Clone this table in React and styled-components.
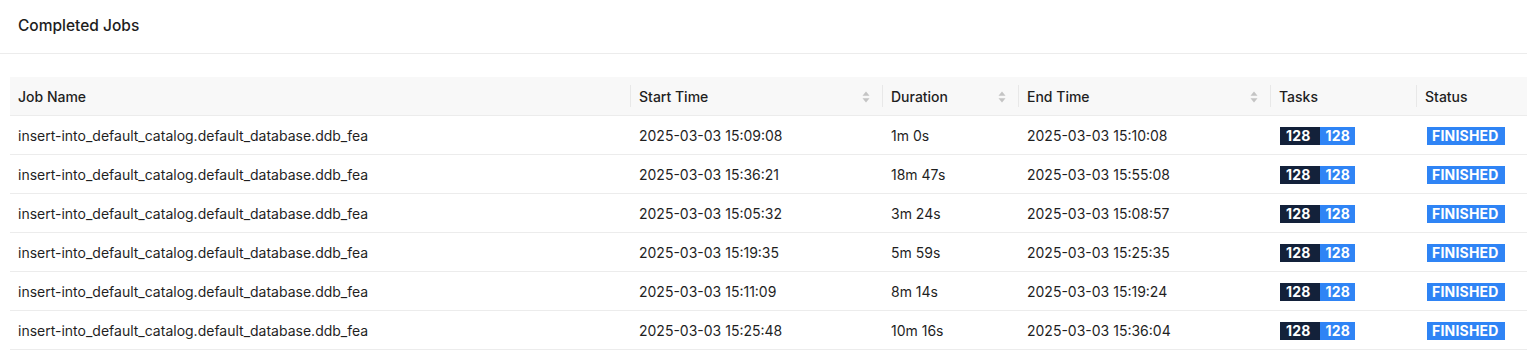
import React from "react";
import styled, { createGlobalStyle } from "styled-components";

const Global = createGlobalStyle`
  html, body { margin: 0; padding: 0; background: #fff; }
  body { font-family: Inter, "Noto Sans", sans-serif; color: #1f1f1f; }
`;

const Card = styled.section`
  display: flex;
  flex-direction: column;
`;

const CardHeader = styled.header`
  height: 54px;
  box-sizing: border-box;
  display: flex;
  align-items: center;
  padding: 0 18px 2px;
  border-bottom: 1px solid #ececec;
  font-size: 15.5px;
  font-weight: 500;
  color: #1d1d1d;
`;

const CardBody = styled.div`
  padding: 23px 0 0 10px;
`;

const Table = styled.table`
  width: 100%;
  border-collapse: separate;
  border-spacing: 0;
  table-layout: fixed;
  font-size: 14px;
`;

const Th = styled.th`
  position: relative;
  height: 39px;
  box-sizing: border-box;
  padding: 1px 8px 0 ${(p) => (p.$first ? 8 : 9)}px;
  text-align: left;
  font-weight: 500;
  color: #1f1f1f;
  background: #f8f8f8;
  border-bottom: 1px solid #ececec;
  &::before {
    content: "";
    display: ${(p) => (p.$first ? "none" : "block")};
    position: absolute;
    left: 0;
    top: 50%;
    transform: translateY(-50%);
    width: 1px;
    height: 22px;
    background: #e8e8e8;
  }
`;

const ThInner = styled.div`
  display: flex;
  align-items: center;
  justify-content: space-between;
`;

const SortIcon = styled.svg`
  width: 8px;
  height: 12px;
  margin-right: 4px;
  flex: none;
`;

const Td = styled.td`
  height: 39px;
  box-sizing: border-box;
  padding: 1px 8px 0 ${(p) => (p.$first ? 8 : 9)}px;
  border-bottom: 1px solid #ececec;
  color: #1f1f1f;
  white-space: nowrap;
  overflow: hidden;
`;

const Badge = styled.span`
  display: inline-flex;
  align-items: center;
  justify-content: center;
  height: 18px;
  padding: 0 ${(p) => p.$pr ?? 6}px 0 ${(p) => p.$pl ?? 6}px;
  background: ${(p) => p.$bg};
  color: #fff;
  font-weight: 700;
  font-size: 14px;
  letter-spacing: 0.2px;
  vertical-align: middle;
`;

const BadgeGroup = styled.span`
  display: inline-flex;
  margin-left: ${(p) => p.$ml ?? 2}px;
`;

const Sorter = () => (
  <SortIcon viewBox="0 0 8 12">
    <path d="M4 0.5 L7.5 4.8 H0.5 Z" fill="#c4c4c4" />
    <path d="M4 11.5 L7.5 7.2 H0.5 Z" fill="#c4c4c4" />
  </SortIcon>
);

const columns = [
  { title: "Job Name", width: 620 },
  { title: "Start Time", width: 252, sort: true },
  { title: "Duration", width: 136, sort: true },
  { title: "End Time", width: 252, sort: true },
  { title: "Tasks", width: 146 },
  { title: "Status" },
];

const rows = [
  ["2025-03-03 15:09:08", "1m 0s", "2025-03-03 15:10:08"],
  ["2025-03-03 15:36:21", "18m 47s", "2025-03-03 15:55:08"],
  ["2025-03-03 15:05:32", "3m 24s", "2025-03-03 15:08:57"],
  ["2025-03-03 15:19:35", "5m 59s", "2025-03-03 15:25:35"],
  ["2025-03-03 15:11:09", "8m 14s", "2025-03-03 15:19:24"],
  ["2025-03-03 15:25:48", "10m 16s", "2025-03-03 15:36:04"],
];

export default function App() {
  return (
    <>
      <Global />
      <Card>
        <CardHeader>Completed Jobs</CardHeader>
        <CardBody>
          <Table>
            <colgroup>
              {columns.map((c) => (
                <col key={c.title} style={c.width ? { width: c.width } : undefined} />
              ))}
            </colgroup>
            <thead>
              <tr>
                {columns.map((c, i) => (
                  <Th key={c.title} $first={i === 0}>
                    <ThInner>
                      <span>{c.title}</span>
                      {c.sort && <Sorter />}
                    </ThInner>
                  </Th>
                ))}
              </tr>
            </thead>
            <tbody>
              {rows.map((r, i) => (
                <tr key={i}>
                  <Td $first>insert-into_default_catalog.default_database.ddb_fea</Td>
                  <Td>{r[0]}</Td>
                  <Td>{r[1]}</Td>
                  <Td>{r[2]}</Td>
                  <Td>
                    <BadgeGroup $ml={1}>
                      <Badge $bg="#13213a" $pl={6} $pr={9}>128</Badge>
                      <Badge $bg="#2f84f5" $pl={6} $pr={5}>128</Badge>
                    </BadgeGroup>
                  </Td>
                  <Td>
                    <BadgeGroup $ml={2}>
                      <Badge $bg="#2f84f5" $pl={5} $pr={6}>FINISHED</Badge>
                    </BadgeGroup>
                  </Td>
                </tr>
              ))}
            </tbody>
          </Table>
        </CardBody>
      </Card>
    </>
  );
}
